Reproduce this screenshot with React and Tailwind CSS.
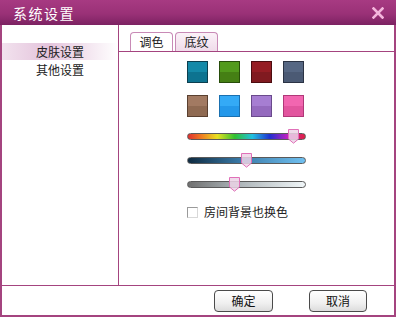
import React from "react";

const F = { fontFamily: '"Noto Sans CJK SC", "Noto Sans", sans-serif' };

function Swatch({ top, bottom, border }) {
  return (
    <div
      className="w-[21px] h-[22px] border flex flex-col"
      style={{ borderColor: border }}
    >
      <div className="flex-1" style={{ background: top }} />
      <div className="flex-1" style={{ background: bottom }} />
    </div>
  );
}

function Thumb() {
  return (
    <svg width="11" height="15" viewBox="0 0 11 15" className="absolute -top-[4px]">
      <path d="M0.5 0.5 H10.5 V10 L5.5 14.2 L0.5 10 Z" fill="#ecd4e6" fillOpacity="0.85" stroke="#e070b8" strokeWidth="1" />
    </svg>
  );
}

function Slider({ bg, pos }) {
  return (
    <div className="relative w-[119px] h-[7px]">
      <div className="w-full h-full rounded-full border border-[#5a5a5a]" style={{ background: bg }} />
      <div className="absolute top-0" style={{ left: pos }}>
        <Thumb />
      </div>
    </div>
  );
}

export default function App() {
  return (
    <div className="w-[396px] h-[317px] bg-white flex flex-col overflow-hidden" style={F}>
      <div className="h-[25px] flex items-center justify-between pl-[13px] pr-[12px] bg-[linear-gradient(#a73a82,#9a3177_55%,#7c2262)]">
        <span className="text-white text-[14px] leading-none tracking-[1.5px]">系统设置</span>
        <svg width="12" height="12" viewBox="0 0 12 12">
          <path d="M1.5 1.5 L10.5 10.5 M10.5 1.5 L1.5 10.5" stroke="#f4b6dc" strokeWidth="2.6" strokeLinecap="square" />
        </svg>
      </div>
      <div className="flex-1 flex flex-col border-l-2 border-r-2 border-b-2 border-[#a4447f]">
        <div className="h-[261px] flex border-b border-[#a4447f]">
          <div className="w-[117px] border-r border-[#a4447f] pt-[18px] flex flex-col">
            <div className="h-[17px] flex items-center pl-[34px] text-[12px] text-[#222] bg-[linear-gradient(to_right,#f2e2ee,#e4c4dc_40%,#ffffff)]">皮肤设置</div>
            <div className="h-[20px] flex items-center pl-[34px] text-[12px] text-[#222]">其他设置</div>
          </div>
          <div className="flex-1 flex flex-col">
            <div className="h-[27px] flex items-end pl-[11px] gap-[2px] border-b border-[#a4447f]">
              <div className="h-[19px] w-[43px] flex items-center justify-center text-[12px] text-[#222] bg-white border border-b-0 border-[#c88ab6] rounded-t-[4px]">调色</div>
              <div className="h-[19px] w-[43px] flex items-center justify-center text-[12px] text-[#222] bg-[linear-gradient(#fbf2f8,#f0dcea)] border border-b-0 border-[#c88ab6] rounded-t-[4px]">底纹</div>
            </div>
            <div className="pl-[68px] pt-[9px] flex flex-col">
              <div className="flex gap-[11px]">
                <Swatch top="#1489a8" bottom="#0d7390" border="#0c3e4e" />
                <Swatch top="#529a1c" bottom="#457f14" border="#274d0a" />
                <Swatch top="#951d24" bottom="#801a20" border="#4c0c10" />
                <Swatch top="#566783" bottom="#4b5a74" border="#2b3344" />
              </div>
              <div className="flex gap-[11px] mt-[12px]">
                <Swatch top="#a27a62" bottom="#8f6a52" border="#5a4030" />
                <Swatch top="#34aaf6" bottom="#2498ea" border="#1a70b0" />
                <Swatch top="#a67ed2" bottom="#946abe" border="#6a4a8c" />
                <Swatch top="#f266b0" bottom="#e2559e" border="#b03878" />
              </div>
              <div className="mt-[16px] flex flex-col gap-[17px]">
                <Slider bg="linear-gradient(to right,#e03030,#f08020 12%,#e8e020 25%,#30c030 40%,#20c0e0 55%,#2030d0 70%,#c020c0 85%,#e02040)" pos="101px" />
                <Slider bg="linear-gradient(to right,#0e2a40,#3a7aa8 45%,#70c0f0)" pos="54px" />
                <Slider bg="linear-gradient(to right,#707070,#a8b0b4 40%,#f0f6f8)" pos="42px" />
              </div>
              <div className="mt-[15px] flex items-center">
                <div className="w-[11px] h-[11px] border border-[#9a9a9a] border-r-[#d8d8d8] border-b-[#d8d8d8] bg-white" />
                <span className="ml-[6px] text-[12px] text-[#222]">房间背景也换色</span>
              </div>
            </div>
          </div>
        </div>
        <div className="flex-1 flex items-center justify-end pr-[27px] gap-[36px]">
          <button className="w-[59px] h-[22px] rounded-[4px] border border-[#4a4a4a] bg-[linear-gradient(#ffffff,#f0f0f0_60%,#dcdcdc)] text-[12px] text-[#111] flex items-center justify-center" style={F}>确定</button>
          <button className="w-[58px] h-[22px] rounded-[4px] border border-[#4a4a4a] bg-[linear-gradient(#ffffff,#f0f0f0_60%,#dcdcdc)] text-[12px] text-[#111] flex items-center justify-center" style={F}>取消</button>
        </div>
      </div>
    </div>
  );
}
